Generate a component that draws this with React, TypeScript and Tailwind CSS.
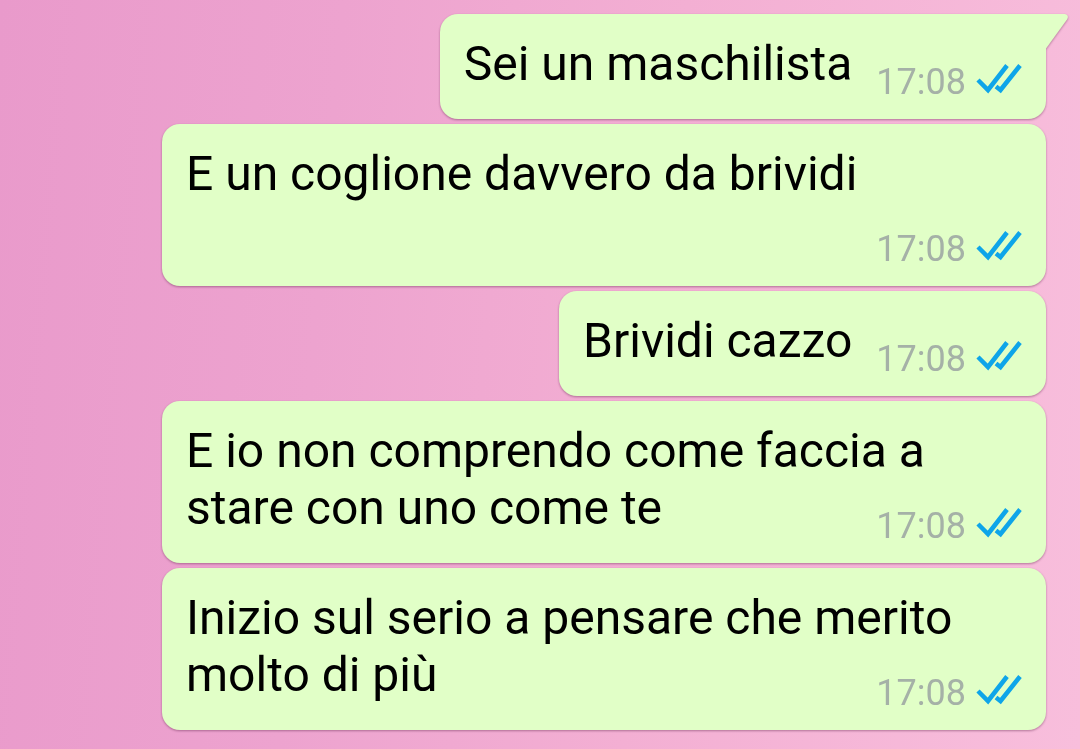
type Message = {
  id: number;
  text: string;
  time: string;
};

const messages: Message[] = [
  { id: 1, text: 'Sei un maschilista', time: '17:08' },
  { id: 2, text: 'E un coglione davvero da brividi', time: '17:08' },
  { id: 3, text: 'Brividi cazzo', time: '17:08' },
  { id: 4, text: 'E io non comprendo come faccia a stare con uno come te', time: '17:08' },
  { id: 5, text: 'Inizio sul serio a pensare che merito molto di più', time: '17:08' },
];

function ReadTicks() {
  return (
    <svg
      className="mb-1.5"
      width="46"
      height="30"
      viewBox="0 0 46 30"
      fill="none"
      stroke="#0ea5e9"
      strokeWidth="4.5"
      role="img"
      aria-label="Letto"
    >
      <path d="M2 16 L12 26 L31 1.5" />
      <path d="M20 22.5 L24.5 26 L44 1.5" />
    </svg>
  );
}

function BubbleTail() {
  return (
    <svg
      className="absolute top-0 left-full"
      width="22"
      height="35"
      viewBox="0 0 22 35"
      aria-hidden="true"
    >
      <path d="M0 0 H19 Q23.5 1 21 5.5 L0 34.5 Z" fill="#e1ffc7" />
    </svg>
  );
}

function MessageBubble({ message, first }: { message: Message; first: boolean }) {
  return (
    <li
      className={`relative rounded-[18px] bg-[#e1ffc7] px-6 pt-[21px] pb-4 drop-shadow-[0_1px_1px_rgba(90,30,70,0.45)] ${
        first ? 'rounded-tr-none' : ''
      }`}
    >
      {first && <BubbleTail />}
      <p className="flow-root text-[48px] leading-[57px] text-black">
        {message.text}
        {/* sits beside the last line, or drops below it when there is no room */}
        <span className="float-right mt-[26px] ml-6 flex items-center gap-2.5">
          <time className="text-[36px] leading-[42px] text-[#a5b1a7]">{message.time}</time>
          <ReadTicks />
        </span>
      </p>
    </li>
  );
}

export default function App() {
  return (
    <main className="min-h-screen bg-linear-[95deg,#e99acb_0%,#eda3cf_30%,#f3afd3_60%,#f8bedc_100%] pt-3.5 pr-[34px] pb-[19px] pl-[162px] font-[Roboto,sans-serif]">
      <ul className="flex flex-col items-end gap-[5px]">
        {messages.map((message, index) => (
          <MessageBubble key={message.id} message={message} first={index === 0} />
        ))}
      </ul>
    </main>
  );
}
